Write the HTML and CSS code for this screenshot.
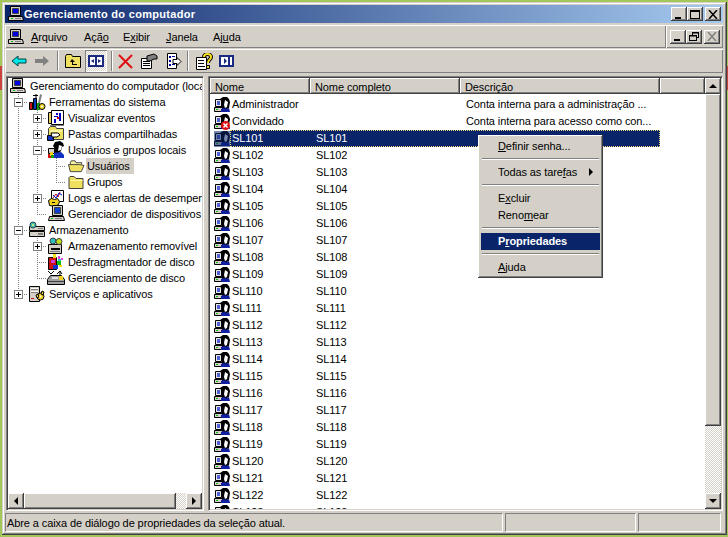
FILE: index.html
```html
<!DOCTYPE html>
<html lang="pt-BR">
<head>
<meta charset="utf-8">
<title>Gerenciamento do computador</title>
<link rel="stylesheet" href="styles.css">
</head>
<body>
<svg class="defs" width="0" height="0" aria-hidden="true">
  <symbol id="i-pc" viewBox="0 0 16 16">
    <path fill="#d4d0c8" stroke="#000" d="M2.500 .5h10v9h-10z"/><path fill="#0000e0" stroke="#404040" d="M4.500 2.500h6v5h-6z"/>
    <path fill="#d4d0c8" stroke="#000" d="M.5 10.500h14l1 4H.5z"/><path fill="#00c000" d="M3 12h2v1H3z"/><path fill="#808080" d="M7 12h6v1H7z"/>
  </symbol>
  <symbol id="i-user" viewBox="0 0 16 16">
    <path fill="#e8e8e8" stroke="#000" d="M1.500 2.500h6v7h-6z"/><path fill="#5060d0" d="M3 4h3v4H3z"/>
    <path fill="#d4d0c8" stroke="#000" d="M.5 10.500h8v4h-8z"/><path fill="#00c000" d="M2 12h2v1H2z"/>
    <path fill="#000" d="M6 2l3-2h4l2 2 1 3-1 6-2 1H9L7 9l1-3z"/><path fill="#fff" d="M11 3l3 2-1 5-2 1-1-3z"/>
    <path fill="#1020a0" d="M7 12l3-1 3 1 2-1 1 4H7z"/>
  </symbol>
  <symbol id="i-userx" viewBox="0 0 16 16">
    <use href="#i-user"/><circle cx="11.500" cy="11.500" r="4.500" fill="#e01010"/><path stroke="#fff" stroke-width="1.500" d="M9.500 9.500l4 4m0-4l-4 4"/>
  </symbol>
  <symbol id="i-usersel" viewBox="0 0 16 16">
    <use href="#i-user"/><path fill="#0a246a" fill-opacity=".55" d="M0 0h16v16H0z"/>
  </symbol>
  <symbol id="i-tools" viewBox="0 0 18 18">
    <path fill="#808080" d="M7 1h2v9H7zM12 1l2 1-2 8h-2z"/><path fill="#000" d="M5 2h5v1H5z"/>
    <path fill="#d01010" stroke="#000" d="M1.500 9.500h3v7h-3z"/><path fill="#0040c0" stroke="#000" d="M5.500 5.500h3v11h-3z"/>
    <path fill="#10a010" d="M9 10h3v7H9z"/><circle cx="14" cy="13.500" r="3" fill="#f0d020" stroke="#000"/><circle cx="14" cy="13.500" r="1" fill="#fff"/>
  </symbol>
  <symbol id="i-event" viewBox="0 0 18 18">
    <path fill="#e8d060" stroke="#000" d="M1.500 3.500h4v11h-4z"/><path fill="#fff" stroke="#000" d="M4.500 1.500h12v14h-12z"/><path fill="#0000c0" d="M9 4h2v2H9zM12 4h2v8h-2zM7 7h4v1H7zM7 10h2v4H7z"/><path fill="#d01010" d="M10 8h2v2h-2z"/><path fill="#808080" d="M3 16h14v1H3z"/>
  </symbol>
  <symbol id="i-share" viewBox="0 0 18 18">
    <path fill="#f0e060" stroke="#404040" d="M1.500 14.500v-11l2-2h5l1 2h7v11z"/><path fill="#fff8a0" d="M3 5h12v2H3z"/>
    <path fill="#1030c0" stroke="#000" d="M0.500 10.500h6v5h-6z"/><path fill="#fff" stroke="#000" d="M4 8h7l2 2-3 2H5z"/>
  </symbol>
  <symbol id="i-users" viewBox="0 0 18 18">
    <path fill="#000" d="M8 1l5-1 3 2 1 3-2 1-1 4-2 2-2 1-3-2 1-3-2-3z"/><path fill="#fff" d="M12 4l3 1-1 4-3 1z"/>
    <path fill="#d4d0c8" stroke="#000" d="M1.500 7.500h6v5h-6z"/><path fill="#1030c0" d="M7 12l7-1 3 3v3H7z"/>
    <path fill="#d01010" d="M1 13h4v4H1z"/><path fill="#f0d020" d="M3 11h3v4H3z"/><path fill="#10a010" d="M4 14h3v3H4z"/>
  </symbol>
  <symbol id="i-folderopen" viewBox="0 0 18 16">
    <path fill="#f8f0a0" stroke="#404040" d="M2.500 13.500v-9l1-2h4l1 2h6v2"/><path fill="#f0e060" stroke="#404040" d="M.5 6.500h12l4.500 1-3 6.500H2.500z"/>
  </symbol>
  <symbol id="i-folder" viewBox="0 0 16 16">
    <path fill="#f0e060" stroke="#404040" d="M.5 14.500v-11l1-1h4l2 2h7v10z"/><path fill="#fff8a0" d="M2 6h12v1H2z"/>
  </symbol>
  <symbol id="i-logs" viewBox="0 0 18 18">
    <path fill="#fff" stroke="#000" d="M4.500 1.500h12v11h-12z"/><path stroke="#d01010" fill="none" d="M6 9l3-4 2 3 2-5"/><path stroke="#0000d0" fill="none" d="M6 6l3 3 3-5 3 2"/>
    <path fill="#f0d020" stroke="#000" d="M1.500 11.500l3-2 3 1 3-1 2 3-1 3-4 2-5-1z"/><path fill="#000" d="M5 13h3v1H5z"/>
  </symbol>
  <symbol id="i-device" viewBox="0 0 18 18">
    <path fill="#d4d0c8" stroke="#000" d="M5.500 .5h10v10h-10z"/><path fill="#1040d0" stroke="#404040" d="M7.500 2.500h6v6h-6z"/>
    <path fill="#d4d0c8" stroke="#000" d="M2.500 11.500h14l1 4H1.500z"/><path fill="#00c000" d="M4 13h2v1H4z"/><path fill="#808080" d="M8 13h7v1H8z"/>
  </symbol>
  <symbol id="i-storage" viewBox="0 0 18 18">
    <path fill="#d4d0c8" stroke="#000" d="M1.500 5.500h15v4h-15zM1.500 10.500h15v5h-15z"/><path fill="#808080" d="M10 7h5v1h-5zM10 12h5v2h-5z"/>
    <circle cx="5" cy="4" r="3" fill="#30c0c0" stroke="#404040"/><circle cx="5" cy="4" r="1" fill="#f0f060"/>
  </symbol>
  <symbol id="i-removable" viewBox="0 0 18 18">
    <path fill="#d4d0c8" stroke="#000" d="M1.500 7.500h13v9h-13z"/><path fill="#000" d="M4 11h9v2H4z"/><path fill="#808080" d="M3 14h10v1H3z"/>
    <circle cx="6" cy="4" r="3" fill="#30c0c0" stroke="#404040"/><circle cx="12" cy="4.500" r="3" fill="#c0e020" stroke="#404040"/>
  </symbol>
  <symbol id="i-defrag" viewBox="0 0 18 18">
    <path fill="#d01010" stroke="#000" d="M1.500 4.500h8v12h-8z"/><path fill="#d040d0" d="M4 7h4v3H4z"/><path fill="#10c010" d="M10 8h4v4h-4z"/><path fill="#1030d0" d="M6 12h5v4H6z"/><path fill="#f0e020" d="M6 1h3v4H6zM12 12h3v2h-3z"/><path fill="#e040e0" d="M11 3h2v3h-2zM14 5h2v2h-2z"/><path fill="#30c0c0" d="M11 6h3v2h-3z"/>
  </symbol>
  <symbol id="i-disk" viewBox="0 0 18 18">
    <path fill="none" stroke="#000" d="M1 2l3 3 3-3m3 3l3-3v4m0-4l2 3"/><path fill="#a0a0a0" stroke="#000" d="M.5 10.500l3-4h11l3 4v5h-17z"/><path fill="#404040" d="M1 12h16v1H1z"/><path fill="#f0d020" d="M12 7h4v4h-4z"/><path fill="#e0e0e0" d="M5 8h6v2H5z"/>
  </symbol>
  <symbol id="i-services" viewBox="0 0 18 18">
    <path fill="#d4d0c8" stroke="#000" d="M1.500 1.500h10v15h-10z"/><path fill="#fff" d="M3 3h7v1H3zM3 6h7v1H3z"/><path fill="#808080" d="M3 4h7v1H3zM3 7h7v1H3z"/><path fill="#d01010" d="M3 13h3v1H3z"/>
    <circle cx="12.500" cy="11.500" r="3.500" fill="#f0d020" stroke="#000"/><path fill="#f0d020" stroke="#000" d="M8 10l2-1 1 3-2 1zM14 6l2 1-1 3-2-1z"/><circle cx="12.500" cy="11.500" r="1" fill="#fff"/>
  </symbol>
</svg>

<div class="window">
  <header class="titlebar">
    <svg class="ico16"><use href="#i-pc"/></svg>
    <span class="title-text">Gerenciamento do computador</span>
    <div class="capbtns">
      <button class="capbtn"><svg width="10" height="9"><path d="M1 7h6v2H1z"/></svg></button>
      <button class="capbtn capgap"><svg width="10" height="9"><path fill-rule="evenodd" d="M0 0h10v9H0zM1 2v6h8V2z"/></svg></button>
      <button class="capbtn"><svg width="10" height="9"><path stroke="#000" stroke-width="1.500" d="M1 0l8 9m0-9l-8 9"/></svg></button>
    </div>
  </header>

  <div class="menubar">
    <nav class="menu-band">
      <svg class="ico16 menu-ico"><use href="#i-pc"/></svg>
      <span class="menu-item m1"><u>A</u>rquivo</span>
      <span class="menu-item m2">Açã<u>o</u></span>
      <span class="menu-item m3">E<u>x</u>ibir</span>
      <span class="menu-item m4"><u>J</u>anela</span>
      <span class="menu-item m5">Aj<u>u</u>da</span>
    </nav>
    <div class="mdi-band">
      <button class="capbtn"><svg width="10" height="9"><path d="M1 7h6v2H1z"/></svg></button>
      <button class="capbtn"><svg width="10" height="9"><path fill-rule="evenodd" d="M3 0h7v6H8v3H0V3h3zM4 1.500V3h4v2h1V1.500zM1 4.500V8h6V4.500z"/></svg></button>
      <button class="capbtn capgap2"><svg width="10" height="9"><path stroke="#808080" stroke-width="1.500" d="M1 0l8 9m0-9l-8 9"/></svg></button>
    </div>
  </div>

  <div class="toolbar">
    <svg class="tb tb-back" width="16" height="14" viewBox="0 0 16 14"><path fill="#00e8e8" stroke="#004040" d="M1 7l6-5v3h8v4H7v3z"/></svg>
    <svg class="tb tb-fwd" width="16" height="14" viewBox="0 0 16 14"><path fill="#808080" d="M15 7L9 2v3H1v4h8v3z"/></svg>
    <span class="tb-sep sep1"></span>
    <svg class="tb tb-up" width="16" height="16" viewBox="0 0 16 16"><path fill="#f0e060" stroke="#000" d="M.5 14.500v-11l1-2h5l1 2h8v11z"/><path fill="#000" d="M7 6l3 3H8v2h4v1H7V9H5z"/></svg>
    <span class="tb-pressed"><svg width="16" height="14" viewBox="0 0 16 14"><path fill="#fff" stroke="#1a2a80" stroke-width="2" d="M1 2h14v10H1z"/><path fill="#1a2a80" d="M7 1h2v12H7zM6 5v4L3 7zM10 5v4l3-2z"/></svg></span>
    <span class="tb-sep sep2"></span>
    <svg class="tb tb-del" width="15" height="15" viewBox="0 0 15 15"><path stroke="#e01010" stroke-width="2" d="M1 1l13 13m0-13L1 14"/></svg>
    <svg class="tb tb-prop" width="17" height="16" viewBox="0 0 17 16"><path fill="#fff" stroke="#000" d="M.5 5.500h10v10H.5z"/><path fill="#000" d="M2 8h7v1H2zM2 10h7v1H2zM2 12h7v1H2z"/><path fill="#808080" stroke="#000" d="M6 3l7-2 3 2v3h-3l-4 2H6z"/></svg>
    <svg class="tb tb-exp" width="16" height="16" viewBox="0 0 16 16"><path fill="#fff" stroke="#000" d="M1.500 .5h9v15h-9z"/><path fill="#0000a0" d="M3 3h2v2H3zM6 3h3v1H6zM3 7h2v2H3zM3 11h2v2H3zM6 11h3v1H6z"/><path fill="#fff" stroke="#000" d="M7 6.500h4v-2l4 4-4 4v-2H7z"/></svg>
    <span class="tb-sep sep3"></span>
    <svg class="tb tb-help" width="17" height="17" viewBox="0 0 17 17"><path fill="#fff" stroke="#000" d="M.5 4.500h10v12H.5z"/><path fill="#000" d="M2 7h6v1H2zM2 10h6v1H2zM2 13h7v1H2z"/><path fill="none" stroke="#000" stroke-width="4" d="M8 4c0-4 7-4 7 0 0 3-3 2-3 6"/><path fill="none" stroke="#f8e020" stroke-width="2" d="M8 4c0-4 7-4 7 0 0 3-3 2-3 6"/><path fill="#f8e020" stroke="#000" d="M10.500 12.500h3v3h-3z"/></svg>
    <svg class="tb tb-panel" width="15" height="14" viewBox="0 0 15 14"><path fill="#fff" stroke="#1a2a80" stroke-width="2" d="M1 2h13v10H1z"/><path fill="#1a2a80" d="M9 1h2v12H9zM5 4l3 3-3 3z"/></svg>
  </div>

  <main class="content">
    <section class="pane tree-pane">
      <div class="tree">
        <div class="row root"><svg class="ico16"><use href="#i-pc"/></svg><span class="lbl root-lbl">Gerenciamento do computador (local)</span></div>
        <div class="row"><span class="g g-tee"><i class="box minus"></i></span><svg class="ico18"><use href="#i-tools"/></svg><span class="lbl">Ferramentas do sistema</span></div>
        <div class="row"><span class="g g-v"></span><span class="g g-tee"><i class="box plus"></i></span><svg class="ico18"><use href="#i-event"/></svg><span class="lbl">Visualizar eventos</span></div>
        <div class="row"><span class="g g-v"></span><span class="g g-tee"><i class="box plus"></i></span><svg class="ico18"><use href="#i-share"/></svg><span class="lbl">Pastas compartilhadas</span></div>
        <div class="row"><span class="g g-v"></span><span class="g g-tee"><i class="box minus"></i></span><svg class="ico18"><use href="#i-users"/></svg><span class="lbl">Usuários e grupos locais</span></div>
        <div class="row"><span class="g g-v"></span><span class="g g-v"></span><span class="g g-tee"></span><svg class="ico18 ico-sm"><use href="#i-folderopen"/></svg><span class="lbl lbl-sel">Usuários</span></div>
        <div class="row"><span class="g g-v"></span><span class="g g-v"></span><span class="g g-end"></span><svg class="ico18 ico-sm"><use href="#i-folder"/></svg><span class="lbl lbl-l3">Grupos</span></div>
        <div class="row"><span class="g g-v"></span><span class="g g-tee"><i class="box plus"></i></span><svg class="ico18"><use href="#i-logs"/></svg><span class="lbl">Logs e alertas de desempenho</span></div>
        <div class="row"><span class="g g-v"></span><span class="g g-end"></span><svg class="ico18"><use href="#i-device"/></svg><span class="lbl">Gerenciador de dispositivos</span></div>
        <div class="row"><span class="g g-tee"><i class="box minus"></i></span><svg class="ico18"><use href="#i-storage"/></svg><span class="lbl">Armazenamento</span></div>
        <div class="row"><span class="g g-v"></span><span class="g g-tee"><i class="box plus"></i></span><svg class="ico18"><use href="#i-removable"/></svg><span class="lbl">Armazenamento removível</span></div>
        <div class="row"><span class="g g-v"></span><span class="g g-tee"></span><svg class="ico18"><use href="#i-defrag"/></svg><span class="lbl">Desfragmentador de disco</span></div>
        <div class="row"><span class="g g-v"></span><span class="g g-end"></span><svg class="ico18"><use href="#i-disk"/></svg><span class="lbl">Gerenciamento de disco</span></div>
        <div class="row"><span class="g g-end"><i class="box plus"></i></span><svg class="ico18"><use href="#i-services"/></svg><span class="lbl">Serviços e aplicativos</span></div>
      </div>
      <div class="hscroll">
        <button class="sb-btn"><i class="arr arr-l"></i></button>
        <span class="sb-thumb h-thumb"></span>
        <span class="sb-track"></span>
        <button class="sb-btn"><i class="arr arr-r"></i></button>
      </div>
    </section>

    <section class="pane list-pane">
      <div class="list">
        <div class="list-head">
          <span class="th th1">Nome</span><span class="th th2">Nome completo</span><span class="th th3">Descrição</span><span class="th th4"></span>
        </div>
        <div class="rows">
          <div class="lrow"><svg class="ico16"><use href="#i-user"/></svg><div class="cells"><span class="c1">Administrador</span><span class="c2"></span><span class="c3">Conta interna para a administração ...</span></div></div>
          <div class="lrow"><svg class="ico16"><use href="#i-userx"/></svg><div class="cells"><span class="c1">Convidado</span><span class="c2"></span><span class="c3">Conta interna para acesso como con...</span></div></div>
          <div class="lrow"><svg class="ico16"><use href="#i-usersel"/></svg><div class="cells cells-sel"><span class="c1">SL101</span><span class="c2">SL101</span><span class="c3"></span></div></div>
          <div class="lrow"><svg class="ico16"><use href="#i-user"/></svg><div class="cells"><span class="c1">SL102</span><span class="c2">SL102</span></div></div>
          <div class="lrow"><svg class="ico16"><use href="#i-user"/></svg><div class="cells"><span class="c1">SL103</span><span class="c2">SL103</span></div></div>
          <div class="lrow"><svg class="ico16"><use href="#i-user"/></svg><div class="cells"><span class="c1">SL104</span><span class="c2">SL104</span></div></div>
          <div class="lrow"><svg class="ico16"><use href="#i-user"/></svg><div class="cells"><span class="c1">SL105</span><span class="c2">SL105</span></div></div>
          <div class="lrow"><svg class="ico16"><use href="#i-user"/></svg><div class="cells"><span class="c1">SL106</span><span class="c2">SL106</span></div></div>
          <div class="lrow"><svg class="ico16"><use href="#i-user"/></svg><div class="cells"><span class="c1">SL107</span><span class="c2">SL107</span></div></div>
          <div class="lrow"><svg class="ico16"><use href="#i-user"/></svg><div class="cells"><span class="c1">SL108</span><span class="c2">SL108</span></div></div>
          <div class="lrow"><svg class="ico16"><use href="#i-user"/></svg><div class="cells"><span class="c1">SL109</span><span class="c2">SL109</span></div></div>
          <div class="lrow"><svg class="ico16"><use href="#i-user"/></svg><div class="cells"><span class="c1">SL110</span><span class="c2">SL110</span></div></div>
          <div class="lrow"><svg class="ico16"><use href="#i-user"/></svg><div class="cells"><span class="c1">SL111</span><span class="c2">SL111</span></div></div>
          <div class="lrow"><svg class="ico16"><use href="#i-user"/></svg><div class="cells"><span class="c1">SL112</span><span class="c2">SL112</span></div></div>
          <div class="lrow"><svg class="ico16"><use href="#i-user"/></svg><div class="cells"><span class="c1">SL113</span><span class="c2">SL113</span></div></div>
          <div class="lrow"><svg class="ico16"><use href="#i-user"/></svg><div class="cells"><span class="c1">SL114</span><span class="c2">SL114</span></div></div>
          <div class="lrow"><svg class="ico16"><use href="#i-user"/></svg><div class="cells"><span class="c1">SL115</span><span class="c2">SL115</span></div></div>
          <div class="lrow"><svg class="ico16"><use href="#i-user"/></svg><div class="cells"><span class="c1">SL116</span><span class="c2">SL116</span></div></div>
          <div class="lrow"><svg class="ico16"><use href="#i-user"/></svg><div class="cells"><span class="c1">SL117</span><span class="c2">SL117</span></div></div>
          <div class="lrow"><svg class="ico16"><use href="#i-user"/></svg><div class="cells"><span class="c1">SL118</span><span class="c2">SL118</span></div></div>
          <div class="lrow"><svg class="ico16"><use href="#i-user"/></svg><div class="cells"><span class="c1">SL119</span><span class="c2">SL119</span></div></div>
          <div class="lrow"><svg class="ico16"><use href="#i-user"/></svg><div class="cells"><span class="c1">SL120</span><span class="c2">SL120</span></div></div>
          <div class="lrow"><svg class="ico16"><use href="#i-user"/></svg><div class="cells"><span class="c1">SL121</span><span class="c2">SL121</span></div></div>
          <div class="lrow"><svg class="ico16"><use href="#i-user"/></svg><div class="cells"><span class="c1">SL122</span><span class="c2">SL122</span></div></div>
          <div class="lrow"><svg class="ico16"><use href="#i-user"/></svg><div class="cells"><span class="c1">SL123</span><span class="c2">SL123</span></div></div>
        </div>
      </div>
      <div class="vscroll">
        <button class="sb-btn"><i class="arr arr-u"></i></button>
        <span class="sb-thumb v-thumb"></span>
        <span class="sb-track"></span>
        <button class="sb-btn"><i class="arr arr-d"></i></button>
      </div>
    </section>
  </main>

  <footer class="statusbar">
    <span class="st st1">Abre a caixa de diálogo de propriedades da seleção atual.</span>
    <span class="st st2"></span>
    <span class="st st3"></span>
  </footer>

  <div class="ctx">
    <div class="ctx-item"><span><u>D</u>efinir senha...</span></div>
    <div class="ctx-sep"></div>
    <div class="ctx-item ctx-sub"><span>Todas as tare<u>f</u>as</span><i class="arr arr-r"></i></div>
    <div class="ctx-sep"></div>
    <div class="ctx-item"><span>E<u>x</u>cluir</span></div>
    <div class="ctx-item"><span>Reno<u>m</u>ear</span></div>
    <div class="ctx-sep"></div>
    <div class="ctx-item ctx-active"><span>P<u>r</u>opriedades</span></div>
    <div class="ctx-sep"></div>
    <div class="ctx-item"><span><u>A</u>juda</span></div>
  </div>
</div>
</body>
</html>
```
FILE: styles.css
```css
* { box-sizing: border-box; }
html, body { margin: 0; padding: 0; }
body {
  width: 728px;
  height: 537px;
  overflow: hidden;
  background: linear-gradient(#a3c75a 0 66px, #c8443c 66px 90px, #a3c75a 90px);
  font: 11px/16px "Liberation Sans", Arial, sans-serif;
  letter-spacing: -.1px;
  color: #000;
}
.defs { display: block; height: 0; }
svg { display: block; flex: none; }
u { text-decoration: underline; text-underline-offset: 1px; }
button { padding: 0; margin: 0; border: 0; }

.window {
  position: relative;
  display: flex;
  flex-direction: column;
  width: 725px;
  height: 533px;
  margin: 2px 1px 2px 2px;
  padding: 3px 4px 3px 3px;
  background: #d4d0c8;
  box-shadow: inset -1px -1px #404040, inset 1px 1px #d4d0c8, inset -2px -2px #808080, inset 2px 2px #fff;
}

.titlebar {
  display: flex;
  align-items: center;
  height: 18px;
  padding: 0 2px 0 3px;
  background: linear-gradient(to right, #0a246a, #a6caf0);
  color: #fff;
  flex: none;
}
.title-text { font-weight: 700; font-size: 11px; letter-spacing: .3px; }
.ico16 { width: 16px; height: 16px; }
.ico18 { width: 18px; height: 18px; margin-top: -1px; }
.capbtns { display: flex; margin-left: auto; }
.capbtn {
  display: flex;
  align-items: center;
  justify-content: center;
  width: 16px;
  height: 14px;
  background: #d4d0c8;
  box-shadow: inset -1px -1px #404040, inset 1px 1px #fff, inset -2px -2px #808080;
}
.capgap { margin-right: 2px; }
.capgap2 { margin-left: 2px; }

.menubar {
  display: flex;
  height: 23px;
  margin-top: 2px;
  flex: none;
}
.menu-band, .toolbar {
  box-shadow: inset 1px 1px #fff, inset -1px -1px #808080;
}
.menu-band {
  display: flex;
  align-items: center;
  flex: 1;
  padding-left: 3px;
}
.menu-ico { margin-right: 7px; }
.menu-item { white-space: nowrap; }
.m1 { width: 53px; }
.m2 { width: 39px; }
.m3 { width: 43px; }
.m4 { width: 47px; }
.mdi-band {
  display: flex;
  align-items: center;
  justify-content: flex-end;
  width: 57px;
  padding-right: 3px;
  box-shadow: inset 1px 1px #fff, inset -1px -1px #808080;
}

.toolbar {
  display: flex;
  align-items: center;
  height: 24px;
  margin-top: 1px;
  padding-left: 6px;
  flex: none;
}
.tb-sep { width: 2px; height: 20px; background: #808080; border-right: 1px solid #fff; }
.tb-fwd { margin-left: 7px; }
.sep1 { margin-left: 7px; }
.tb-up { margin-left: 6px; }
.tb-pressed {
  display: flex;
  align-items: center;
  justify-content: center;
  width: 22px;
  height: 22px;
  margin-left: 4px;
  background: repeating-conic-gradient(#fff 0 25%, #d4d0c8 0 50%) 0 0 / 2px 2px;
  box-shadow: inset 1px 1px #808080, inset -1px -1px #fff;
}
.sep2 { margin-left: 4px; }
.tb-del { margin-left: 5px; }
.tb-prop { margin-left: 8px; }
.tb-exp { margin-left: 8px; }
.sep3 { margin-left: 5px; }
.tb-help { margin-left: 7px; }
.tb-panel { margin-left: 6px; }

.content {
  display: flex;
  flex: 1;
  min-height: 0;
  margin-top: 3px;
  margin-bottom: 2px;
  padding-left: 1px;
  gap: 4px;
}
.pane {
  display: flex;
  background: #fff;
  border: 1px solid;
  border-color: #808080 #fff #fff #808080;
  box-shadow: inset 1px 1px #404040, inset -1px -1px #d4d0c8;
  padding: 1px;
}
.tree-pane { width: 198px; flex-direction: column; }
.list-pane { flex: 1; min-width: 0; }

.tree {
  flex: 1;
  min-height: 0;
  padding: 0 0 0 1px;
  overflow: hidden;
}
.row {
  display: flex;
  align-items: center;
  height: 16px;
  white-space: nowrap;
}
.root { padding-left: 1px; }
.lbl { margin-left: 3px; }
.root-lbl { margin-left: 4px; }
.g {
  display: flex;
  align-items: center;
  justify-content: center;
  width: 19px;
  height: 16px;
  flex: none;
  background-repeat: no-repeat;
}
.g-v {
  background-image: repeating-linear-gradient(#808080 0 1px, transparent 1px 2px);
  background-size: 1px 16px;
  background-position: 9px 0;
}
.g-tee, .g-end {
  background-image:
    repeating-linear-gradient(to right, #808080 0 1px, transparent 1px 2px),
    repeating-linear-gradient(#808080 0 1px, transparent 1px 2px);
  background-position: 9px 8px, 9px 0;
}
.g-tee { background-size: 10px 1px, 1px 16px; }
.g-end { background-size: 10px 1px, 1px 9px; }
.box {
  display: block;
  width: 9px;
  height: 9px;
  border: 1px solid #808080;
  background-color: #fff;
  background-repeat: no-repeat;
}
.minus { background-image: linear-gradient(#000, #000); background-size: 5px 1px; background-position: 1px 3px; }
.plus {
  background-image: linear-gradient(#000, #000), linear-gradient(#000, #000);
  background-size: 5px 1px, 1px 5px;
  background-position: 1px 3px, 3px 1px;
}
.ico-sm { width: 17px; height: 16px; margin: 0 0 0 2px; }
.lbl-sel { margin-left: 1px; padding: 0 1px; width: 48px; background: #d4d0c8; }
.lbl-l3 { margin-left: 2px; }

.hscroll { display: flex; height: 16px; flex: none; }
.vscroll { display: flex; flex-direction: column; width: 16px; flex: none; }
.sb-btn {
  display: flex;
  align-items: center;
  justify-content: center;
  width: 16px;
  height: 16px;
  flex: none;
  background: #d4d0c8;
  box-shadow: inset -1px -1px #404040, inset 1px 1px #fff, inset -2px -2px #808080;
}
.sb-thumb {
  display: block;
  background: #d4d0c8;
  box-shadow: inset -1px -1px #404040, inset 1px 1px #fff, inset -2px -2px #808080;
  flex: none;
}
.h-thumb { width: 152px; }
.v-thumb { height: 332px; }
.sb-track {
  flex: 1;
  background: repeating-conic-gradient(#fff 0 25%, #d4d0c8 0 50%) 0 0 / 2px 2px;
}
.arr { display: block; width: 0; height: 0; border: solid transparent; }
.arr-l { border-width: 4px 4px 4px 0; border-right-color: #000; }
.arr-r { border-width: 4px 0 4px 4px; border-left-color: #000; }
.arr-u { border-width: 0 4px 4px 4px; border-bottom-color: #000; }
.arr-d { border-width: 4px 4px 0 4px; border-top-color: #000; }

.list { flex: 1; min-width: 0; display: flex; flex-direction: column; overflow: hidden; }
.list-head { display: flex; height: 16px; flex: none; }
.th {
  height: 16px;
  padding-left: 5px;
  line-height: 18px;
  background: #d4d0c8;
  box-shadow: inset -1px -1px #404040, inset 1px 1px #fff, inset -2px -2px #808080;
  white-space: nowrap;
}
.th1 { width: 100px; }
.th2 { width: 150px; }
.th3 { width: 200px; }
.th4 { flex: 1; }
.rows { padding-top: 2px; flex: 1; min-height: 0; overflow: hidden; }
.lrow { display: flex; align-items: center; height: 17px; padding-left: 4px; }
.cells { display: flex; width: 430px; height: 17px; line-height: 17px; white-space: nowrap; }
.c1 { width: 80px; padding-left: 2px; }
.c2 { width: 150px; padding-left: 6px; }
.c3 { width: 200px; padding-left: 6px; }
.cells-sel { background: #0a246a; color: #fff; outline: 1px dotted #f0d878; outline-offset: -1px; }

.statusbar { display: flex; height: 19px; flex: none; gap: 2px; padding-right: 2px; }
.st {
  display: block;
  height: 19px;
  padding-left: 1px;
  line-height: 18px;
  border: 1px solid;
  border-color: #808080 #fff #fff #808080;
  white-space: nowrap;
}
.st1 { width: 498px; }
.st2 { width: 131px; }
.st3 { flex: 1; }

.ctx {
  position: absolute;
  left: 476px;
  top: 133px;
  width: 125px;
  height: 143px;
  padding: 3px;
  background: #d4d0c8;
  box-shadow: inset -1px -1px #404040, inset 1px 1px #fff, inset -2px -2px #808080;
}
.ctx-item {
  display: flex;
  align-items: center;
  height: 17px;
  padding: 0 5px 1px 17px;
  white-space: nowrap;
}
.ctx-sub { justify-content: space-between; padding-right: 7px; }
.ctx-sep { height: 9px; margin: 0 1px; background: linear-gradient(#808080, #808080) 0 3px / 100% 1px no-repeat, linear-gradient(#fff, #fff) 0 4px / 100% 1px no-repeat; }
.ctx-active { background: #0a246a; color: #fff; font-weight: 700; }
```
